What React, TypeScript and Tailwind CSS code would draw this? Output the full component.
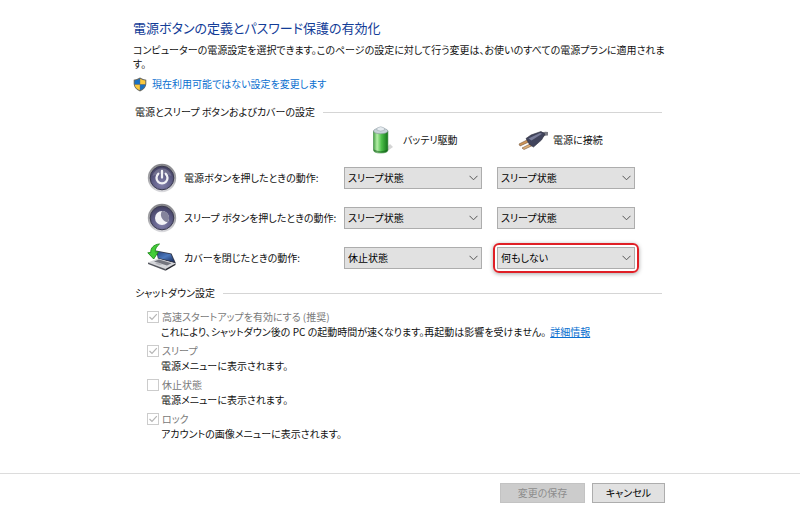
import React, { useState } from 'react';

const PowerIcon = () => (
  <svg viewBox="0 0 30 30" className="h-[30px] w-[30px] shrink-0" aria-hidden="true">
    <defs>
      <linearGradient id="rim" x1="0" y1="0" x2="0" y2="1">
        <stop offset="0" stopColor="#858589" />
        <stop offset="0.5" stopColor="#a2a2a6" />
        <stop offset="1" stopColor="#dcdce0" />
      </linearGradient>
      <radialGradient id="disc" cx="0.5" cy="0.75" r="0.7">
        <stop offset="0" stopColor="#8482ac" />
        <stop offset="0.6" stopColor="#5d5b84" />
        <stop offset="1" stopColor="#454366" />
      </radialGradient>
    </defs>
    <circle cx="15" cy="15" r="14.2" fill="url(#rim)" />
    <circle cx="15" cy="15" r="11.8" fill="url(#disc)" stroke="#3b3a50" strokeWidth="1" />
    <path d="M5.5 13a9.7 9.7 0 0 1 19 0q-9.5-5-19 0z" fill="#fff" opacity="0.18" />
    <path d="M11.3 10.8a5.5 5.5 0 1 0 7.4 0" fill="none" stroke="#f1f1f6" strokeWidth="2.3" strokeLinecap="round" />
    <path d="M15 8v6.5" stroke="#f1f1f6" strokeWidth="2.3" strokeLinecap="round" />
  </svg>
);

const SleepIcon = () => (
  <svg viewBox="0 0 30 30" className="h-[30px] w-[30px] shrink-0" aria-hidden="true">
    <circle cx="15" cy="15" r="14.2" fill="url(#rim)" />
    <circle cx="15" cy="15" r="11.8" fill="url(#disc)" stroke="#3b3a50" strokeWidth="1" />
    <circle cx="15" cy="15" r="7" fill="#f3f3f7" />
    <path d="M15 8a7 7 0 0 1 5.6 11.2Q16.5 18.5 14.5 14.5 13 11 15 8z" fill="#85849c" />
  </svg>
);

const LidIcon = () => (
  <svg viewBox="0 0 30 30" className="h-[30px] w-[30px] shrink-0" aria-hidden="true">
    <defs>
      <linearGradient id="screen" x1="0" y1="0" x2="1" y2="1">
        <stop offset="0" stopColor="#26437f" />
        <stop offset="0.5" stopColor="#4c78bd" />
        <stop offset="1" stopColor="#182a58" />
      </linearGradient>
    </defs>
    <path d="M9 7.5L24.5 10.5 29 20.5 11 16z" fill="#34394b" />
    <path d="M10 8.5L23.8 11.3 27.3 18.7 11.5 15z" fill="url(#screen)" />
    <path d="M1 19.5L11 15.5 28.5 20.5 18.5 26z" fill="#d5d6da" />
    <path d="M1 19.5L18.5 26v1.8L1 21z" fill="#55575f" />
    <path d="M18.5 26L28.5 20.5v1.5l-10 5.8z" fill="#26282f" />
    <path d="M7 18.5L12 16.6 24.5 20.2 20 22.5z" fill="#74767f" />
    <path d="M8 20.6l3-1 4.5 1.6-3 1.1z" fill="#b4b5bb" />
    <path d="M12.5 1C6.5 1.5 3.7 5 3.7 9.5L.8 9.8 6.7 16 11.5 8.5 8.3 9C8 6 9.5 3.5 12.5 1z" fill="#43cc38" stroke="#1d8c1a" strokeWidth="0.9" />
  </svg>
);

const BatteryIcon = () => (
  <svg viewBox="0 0 24 30" className="h-[30px] w-6 shrink-0" aria-hidden="true">
    <defs>
      <linearGradient id="cell" x1="0" y1="0" x2="1" y2="0">
        <stop offset="0" stopColor="#48a347" />
        <stop offset="0.25" stopColor="#b5eea8" />
        <stop offset="0.55" stopColor="#4dc04a" />
        <stop offset="1" stopColor="#14751b" />
      </linearGradient>
    </defs>
    <path d="M15 27l7-5-3-3-4 4z" fill="#b9b9b9" opacity="0.6" />
    <path d="M2.5 6v19q0 3 7.2 3t7.2-3V6z" fill="url(#cell)" stroke="#3b8640" strokeWidth="0.6" />
    <ellipse cx="9.7" cy="6" rx="7.2" ry="2.8" fill="#c7d3d8" stroke="#87949a" strokeWidth="0.6" />
    <path d="M6 5.2V3q3.7-2.6 7.4 0v2.2q-3.7 1.8-7.4 0z" fill="#e5ebef" stroke="#94a0a8" strokeWidth="0.5" />
    <path d="M2.8 24.5q6.9 3.5 13.8 0v1q-1 2-6.9 2t-6.9-2z" fill="#125a19" opacity="0.55" />
  </svg>
);

const PlugIcon = () => (
  <svg viewBox="0 0 32 20" className="h-5 w-8 shrink-0" aria-hidden="true">
    <path d="M22 4Q26 1 31 2v3.5Q27 5 23.5 9z" fill="#7d7e87" />
    <path d="M2 14L11 9.5l2 2L3 16z" fill="#cf9557" stroke="#76583c" strokeWidth="0.6" />
    <path d="M5 18L15 13l1.5 2L7 19.5z" fill="#e2b279" stroke="#76583c" strokeWidth="0.6" />
    <path d="M9 8.5L14 5 24 1.5 28 4 24.5 10 16.5 17 12.5 14.5z" fill="#41445c" stroke="#2c2d3d" strokeWidth="0.6" />
    <path d="M11.5 8.5L23 3l2 .8-10.5 6.7z" fill="#7a7e9a" />
  </svg>
);

const ShieldIcon = () => (
  <svg viewBox="0 0 14 15" className="h-[15px] w-[14px] shrink-0" aria-hidden="true">
    <path d="M7 .5Q4 2.5.7 2.7V7Q1 12 7 14.5 13 12 13.3 7V2.7Q10 2.5 7 .5z" fill="#6a6a62" />
    <path d="M6.8 1.8Q4.5 3.3 1.7 3.6V7.3H6.8z" fill="#1970c4" />
    <path d="M7.2 1.8Q9.5 3.3 12.3 3.6V7.3H7.2z" fill="#fbc93d" />
    <path d="M1.7 7.7H6.8V13.3Q2.3 11.4 1.7 7.7z" fill="#fbc93d" />
    <path d="M12.3 7.7H7.2V13.3Q11.7 11.4 12.3 7.7z" fill="#1970c4" />
  </svg>
);

const actions = ['何もしない', 'スリープ状態', '休止状態', 'シャットダウン'];

interface ActionSelectProps {
  id: string;
  label: string;
  initial: string;
  highlighted?: boolean;
}

const ActionSelect: React.FC<ActionSelectProps> = ({ id, label, initial, highlighted }) => {
  const [value, setValue] = useState(initial);

  return (
    <div className="relative">
      <select
        id={id}
        aria-label={label}
        value={value}
        onChange={(e) => setValue(e.target.value)}
        className="block h-[22px] w-full appearance-none border border-[#adadad] bg-[#e1e1e1] pl-[3px] pr-5 text-[10px] leading-5 text-black"
      >
        {actions.map((action) => (
          <option key={action}>{action}</option>
        ))}
      </select>
      <svg viewBox="0 0 9 6" className="pointer-events-none absolute right-1 top-2 h-[6px] w-[9px]" aria-hidden="true">
        <path d="M.5.8L4.5 4.8 8.5.8" fill="none" stroke="#555555" strokeWidth="1" />
      </svg>
      {highlighted && (
        <span className="pointer-events-none absolute -inset-1 rounded-md border-2 border-[#e01f26] shadow-[0_1px_4px_rgba(0,0,0,0.35)]" />
      )}
    </div>
  );
};

const rows = [
  { id: 'power', label: '電源ボタンを押したときの動作:', icon: <PowerIcon />, battery: 'スリープ状態', ac: 'スリープ状態' },
  { id: 'sleep', label: 'スリープ ボタンを押したときの動作:', icon: <SleepIcon />, battery: 'スリープ状態', ac: 'スリープ状態' },
  { id: 'lid', label: 'カバーを閉じたときの動作:', icon: <LidIcon />, battery: '休止状態', ac: '何もしない', highlighted: true },
];

const shutdownOptions = [
  {
    id: 'fast',
    label: '高速スタートアップを有効にする (推奨)',
    text: 'これにより、シャットダウン後の PC の起動時間が速くなります。再起動は影響を受けません。',
    link: '詳細情報',
    checked: true,
  },
  { id: 'opt-sleep', label: 'スリープ', text: '電源メニューに表示されます。', checked: true },
  { id: 'opt-hibernate', label: '休止状態', text: '電源メニューに表示されます。', checked: false },
  { id: 'opt-lock', label: 'ロック', text: 'アカウントの画像メニューに表示されます。', checked: true },
];

const SectionTitle: React.FC<{ children: React.ReactNode }> = ({ children }) => (
  <div className="flex items-center gap-2">
    <h2 className="whitespace-nowrap leading-4">{children}</h2>
    <span className="h-px flex-1 bg-[#d5d5d5]" />
  </div>
);

const App: React.FC = () => {
  return (
    <div className="min-h-screen bg-white font-['Noto_Sans_CJK_JP',sans-serif] text-[10px] leading-[14px] text-[#111111] [font-feature-settings:'palt']">
      <main className="pl-[133px] pr-[138px] pt-[18px]">
        <h1 className="text-[13px] leading-5 text-[#123c97]">電源ボタンの定義とパスワード保護の有効化</h1>
        <p className="-mr-2 mt-[5px]">
          コンピューターの電源設定を選択できます。このページの設定に対して行う変更は、お使いのすべての電源プランに適用されます。
        </p>
        <a href="#" className="mt-[5px] flex items-center gap-[5px] leading-4 text-[#0a6fd0]">
          <ShieldIcon />
          現在利用可能ではない設定を変更します
        </a>

        <section className="mt-3 pl-[2px]">
          <SectionTitle>電源とスリープ ボタンおよびカバーの設定</SectionTitle>
          <div className="mt-[5px] grid grid-cols-[minmax(0,1fr)_138px_138px] gap-x-[15px] pl-3 pr-[27px]">
            <div className="col-start-2 flex h-[30px] items-center gap-2 pl-[27px]">
              <BatteryIcon />
              バッテリ駆動
            </div>
            <div className="flex h-[30px] items-center gap-1 pl-5">
              <PlugIcon />
              電源に接続
            </div>
          </div>
          <div className="mt-2 flex flex-col gap-[10px] pl-3 pr-[27px]">
            {rows.map((row) => (
              <div key={row.id} className="grid grid-cols-[minmax(0,1fr)_138px_138px] items-center gap-x-[15px]">
                <label htmlFor={`${row.id}-battery`} className="flex items-center gap-[7px] whitespace-nowrap">
                  {row.icon}
                  {row.label}
                </label>
                <ActionSelect id={`${row.id}-battery`} label={`${row.label} バッテリ駆動`} initial={row.battery} />
                <ActionSelect
                  id={`${row.id}-ac`}
                  label={`${row.label} 電源に接続`}
                  initial={row.ac}
                  highlighted={row.highlighted}
                />
              </div>
            ))}
          </div>
        </section>

        <section className="mt-3 pl-[2px]">
          <SectionTitle>シャットダウン設定</SectionTitle>
          <div className="mt-2 flex flex-col gap-1 pl-3">
            {shutdownOptions.map((option) => (
              <div key={option.id}>
                <div className="flex h-4 items-center gap-[3px] text-[#7a7a7a]">
                  <span className="relative h-3 w-3">
                    <input
                      id={option.id}
                      type="checkbox"
                      disabled
                      defaultChecked={option.checked}
                      className="block h-3 w-3 appearance-none border border-[#cccccc] bg-white"
                    />
                    {option.checked && (
                      <svg viewBox="0 0 12 12" className="pointer-events-none absolute inset-0 h-3 w-3" aria-hidden="true">
                        <path d="M2.5 6L5 8.5 9.8 3.2" fill="none" stroke="#b5b5b5" strokeWidth="1.2" />
                      </svg>
                    )}
                  </span>
                  <label htmlFor={option.id}>{option.label}</label>
                </div>
                <p className="pl-[14px]">
                  {option.text}
                  {option.link && (
                    <a href="#" className="ml-1 text-[#0a6fd0] underline">
                      {option.link}
                    </a>
                  )}
                </p>
              </div>
            ))}
          </div>
        </section>
      </main>

      <footer className="mt-8 flex justify-end gap-[7px] border-t border-[#dcdcdc] pb-2 pr-[135px] pt-[9px]">
        <button disabled className="h-5 w-[85px] border border-[#c3c3c3] bg-[#cccccc] leading-4 text-[#8c8c8c]">
          変更の保存
        </button>
        <button className="h-5 w-[73px] border border-[#adadad] bg-[#e1e1e1] leading-4 text-black">キャンセル</button>
      </footer>
    </div>
  );
};

export default App;
